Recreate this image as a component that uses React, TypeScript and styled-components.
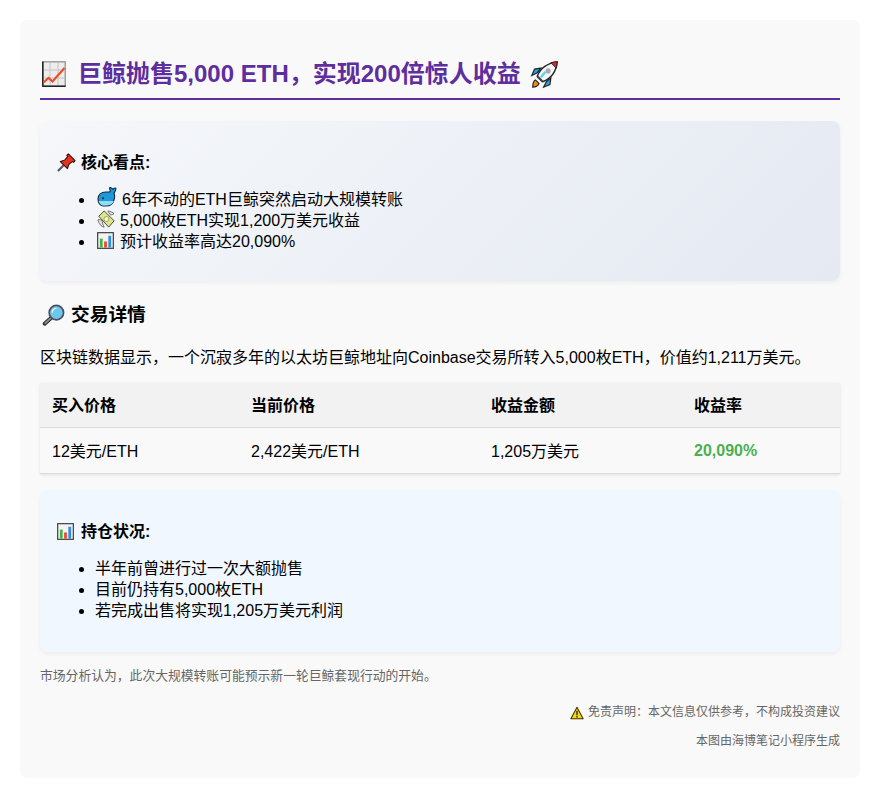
import React from "react";
import styled, { createGlobalStyle } from "styled-components";

const Global = createGlobalStyle`
  html, body { margin: 0; padding: 0; background: #fff; }
  body { font-family: "Liberation Sans", "Noto Sans CJK SC", sans-serif; font-size: 16px; line-height: 21px; color: #000; }
`;
const Page = styled.div`padding: 20px;`;
const Card = styled.main`
  background: #f9f9f9; border-radius: 8px; padding: 20px; height: 758px; box-sizing: border-box;
`;
const Title = styled.h1`
  margin: 18px 0 21px; padding-bottom: 8px; border-bottom: 2px solid #5e2d9e;
  color: #5e2d9e; font-size: 24px; line-height: 32px; font-weight: 700;
  display: flex; align-items: center;
`;
const Panel = styled.section<{ $soft?: boolean }>`
  border-radius: 8px; padding: 15px; box-shadow: 0 2px 4px rgba(0,0,0,.05);
  background: ${(p) => (p.$soft ? "#f0f7ff" : "linear-gradient(135deg,#f5f7fa,#e4e9f2)")};
  margin-bottom: ${(p) => (p.$soft ? "15px" : "22px")};
`;
const PanelHead = styled.p`
  margin: 16px 0; font-weight: 700; display: flex; align-items: center; height: 21px;
`;
const List = styled.ul<{ $tail: number }>`margin: 16px 0 ${(p) => p.$tail}px; padding-left: 40px;`;
const Item = styled.li``;
const SectionHead = styled.h3`
  margin: 0 0 20px; font-size: 18.72px; line-height: 24px; font-weight: 700; display: flex; align-items: center;
`;
const Body = styled.p`margin: 0 0 15px;`;
const Table = styled.table`
  width: 800px; border-collapse: collapse; table-layout: fixed; margin-bottom: 16px;
  box-shadow: 0 1px 3px rgba(0,0,0,.1); background: #f9f9f9;
`;
const Head = styled.th<{ $w: number }>`
  width: ${(p) => p.$w}px; box-sizing: border-box; text-align: left; padding: 12px 12px 11px; background: #f2f2f2;
  border-bottom: 1px solid #ddd; font-weight: 700;
`;
const Cell = styled.td`padding: 12px 12px 11px; border-bottom: 1px solid #ddd;`;
const Gain = styled.span`color: #4caf50; font-weight: 700; vertical-align: 1px;`;
const Note = styled.p`margin: 0 0 20px; font-size: 12.8px; line-height: 17px; color: #666;`;
const Foot = styled.p`
  margin: 0 0 12px; font-size: 12px; line-height: 17px; color: #666;
  display: flex; justify-content: flex-end; align-items: center;
`;
const Glyph = styled.svg<{ $w: number; $h?: number; $ml?: number; $mr?: number }>`
  width: ${(p) => p.$w}px; height: ${(p) => p.$h ?? p.$w}px; flex: none; display: inline-block;
  vertical-align: 2px; margin: -4px ${(p) => p.$mr ?? 0}px -4px ${(p) => p.$ml ?? 0}px;
`;

type G = { w: number; h?: number; ml?: number; mr?: number };
const box = ({ w, h, ml, mr }: G) => ({ $w: w, $h: h, $ml: ml, $mr: mr });

const ChartUp = (p: G) => (
  <Glyph {...box(p)} viewBox="0 0 24 26">
    <rect x=".8" y=".8" width="22.400" height="24.400" fill="#ececec" stroke="#8a8a8a" strokeWidth="1.200" />
    <path d="M8 1v24M16 1v24M1 9h22M1 17h22" stroke="#c4c4c4" strokeWidth="1" />
    <path d="M.8 .5v25M.3 25.200h23.400" stroke="#222" strokeWidth="1.500" />
    <path d="M1.500 21.500l5-4.500 4 3.500L22.500 7" fill="none" stroke="#ea4f28" strokeWidth="2.200" />
  </Glyph>
);
const Rocket = (p: G) => (
  <Glyph {...box(p)} viewBox="0 0 32 32">
    <path d="M3 30c0-4 1-7 3-8l4 4c-1 2-4 4-7 4z" fill="#f08a1d" stroke="#222" strokeWidth="1.300" />
    <path d="M8 14l-6 3 3-7 7-1zM18 24l-3 6 7-3 1-7z" fill="#1fa8e8" stroke="#222" strokeWidth="1.300" />
    <path d="M8 18C11 9 20 3 30 2c-1 10-6 18-16 22z" fill="#f4f6f8" stroke="#222" strokeWidth="1.500" />
    <path d="M23 3c2-.6 5-1 7-1-.1 2-.5 5-1 7z" fill="#e5232e" stroke="#222" strokeWidth="1" />
    <circle cx="20" cy="12" r="2.800" fill="#a9acb0" />
    <path d="M12 19l5-6" stroke="#5fd3f5" strokeWidth="2.600" />
    <path d="M8 18l6 6" stroke="#444" strokeWidth="2.400" />
  </Glyph>
);
const Pin = (p: G) => (
  <Glyph {...box(p)} viewBox="0 0 20 20">
    <path d="M1 19l6-6" stroke="#555" strokeWidth="2.200" />
    <path d="M3.500 9L11 16.500l1.500-4.500 3.500-3 1.500.8L19 8 12 1l-1.700 1.500.8 1.500L8 7.500z" fill="#e8321a" stroke="#2a0a06" strokeWidth="1.100" strokeLinejoin="round" />
  </Glyph>
);
const Whale = (p: G) => (
  <Glyph {...box(p)} viewBox="0 0 20 20">
    <path d="M1 12c0-4 3-7 8-7h3c1 0 1.500-.8 1-2-.3-.8-.5-1.500-.2-2.500 1.300.2 2.500.8 3 1.800.8-.8 2-1.300 3-1.300.2 2-.6 3.800-1.800 5 .8 2.200.8 5 0 7-1 3.500-4 6-8 6H6c-3 0-5-3.500-5-7z" fill="#1f97d8" stroke="#0e2a3a" strokeWidth="1.100" strokeLinejoin="round" />
    <path d="M1.600 14h15.300c-1 2.800-3.500 4.400-6.900 4.400H6c-2 0-3.600-2-4.400-4.400z" fill="#8fdcf3" />
    <circle cx="6" cy="11.300" r="1" fill="#0e2a3a" />
  </Glyph>
);
const Money = (p: G) => (
  <Glyph {...box(p)} viewBox="0 0 20 20">
    <path d="M8 1l11 11-6 7L2 7z" fill="#dfe58a" stroke="#4a4a32" strokeWidth="1.100" strokeLinejoin="round" />
    <circle cx="10.500" cy="10" r="2.800" fill="#f4f5d0" stroke="#7b8a4a" strokeWidth=".8" />
    <path d="M1 11c2-1 4 0 5 2 0 2 1 4 2 6-3 0-6-4-7-8z" fill="#e2e2e2" stroke="#555" strokeWidth=".9" />
    <path d="M12 1c2 .5 5 1 7 3-2 1-3 1.500-4 1.500z" fill="#e8e8e8" stroke="#555" strokeWidth=".9" />
  </Glyph>
);
const Bars = (p: G) => (
  <Glyph {...box(p)} viewBox="0 0 18 18">
    <rect x=".7" y=".7" width="16.600" height="16.600" fill="#f3f3f3" stroke="#444" strokeWidth="1.300" />
    <rect x="3" y="7" width="3" height="9.500" fill="#3fb54a" />
    <rect x="7.500" y="10" width="3" height="6.500" fill="#ef4b32" />
    <rect x="12" y="4" width="3" height="12.500" fill="#2d8fe0" />
  </Glyph>
);
const Lens = (p: G) => (
  <Glyph {...box(p)} viewBox="0 0 24 24">
    <path d="M10 14L2.800 20.500" stroke="#333" strokeWidth="4.200" strokeLinecap="round" />
    <path d="M10 14L3.500 20" stroke="#8a8f94" strokeWidth="2" strokeLinecap="round" />
    <circle cx="15" cy="9" r="7.500" fill="#6fc6ee" stroke="#4a5258" strokeWidth="1.800" />
    <path d="M10.500 9a5 5 0 0 1 4.500-4.500" fill="none" stroke="#d8f1fb" strokeWidth="1.600" />
  </Glyph>
);
const Warn = (p: G) => (
  <Glyph {...box(p)} viewBox="0 0 16 16">
    <path d="M8 1.500L15 14.500H1z" fill="#f8d90f" stroke="#3a3200" strokeWidth="1.200" strokeLinejoin="round" />
    <path d="M8 5.500v5M8 11.500v1.500" stroke="#222" strokeWidth="1.500" />
  </Glyph>
);

export default function App() {
  return (
    <Page>
      <Global />
      <Card>
        <Title>
          <ChartUp w={24} h={26} ml={2} mr={12} />
          巨鲸抛售5,000 ETH，实现200倍惊人收益
          <Rocket w={29} ml={9} />
        </Title>
        <Panel>
          <PanelHead><Pin w={19} ml={2} mr={5} />核心看点:</PanelHead>
          <List $tail={14}>
            <Item><Whale w={20} ml={2} mr={5} />6年不动的ETH巨鲸突然启动大规模转账</Item>
            <Item><Money w={18} ml={2} mr={5} />5,000枚ETH实现1,200万美元收益</Item>
            <Item><Bars w={17} ml={2} mr={6} />预计收益率高达20,090%</Item>
          </List>
        </Panel>
        <SectionHead><Lens w={23} ml={2} mr={6} />交易详情</SectionHead>
        <Body>区块链数据显示，一个沉寂多年的以太坊巨鲸地址向Coinbase交易所转入5,000枚ETH，价值约1,211万美元。</Body>
        <Table>
          <thead>
            <tr>
              <Head $w={199}>买入价格</Head>
              <Head $w={240}>当前价格</Head>
              <Head $w={203}>收益金额</Head>
              <Head $w={158}>收益率</Head>
            </tr>
          </thead>
          <tbody>
            <tr>
              <Cell>12美元/ETH</Cell>
              <Cell>2,422美元/ETH</Cell>
              <Cell>1,205万美元</Cell>
              <Cell><Gain>20,090%</Gain></Cell>
            </tr>
          </tbody>
        </Table>
        <Panel $soft>
          <PanelHead><Bars w={17} ml={2} mr={7} />持仓状况:</PanelHead>
          <List $tail={16}>
            <Item>半年前曾进行过一次大额抛售</Item>
            <Item>目前仍持有5,000枚ETH</Item>
            <Item>若完成出售将实现1,205万美元利润</Item>
          </List>
        </Panel>
        <Note>市场分析认为，此次大规模转账可能预示新一轮巨鲸套现行动的开始。</Note>
        <Foot><Warn w={14} mr={4} />免责声明：本文信息仅供参考，不构成投资建议</Foot>
        <Foot>本图由海博笔记小程序生成</Foot>
      </Card>
    </Page>
  );
}
